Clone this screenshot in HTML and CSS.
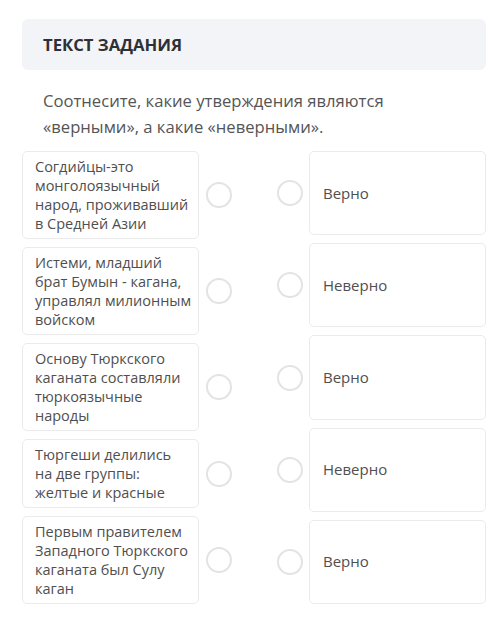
FILE: index.html
```html
<!DOCTYPE html>
<html lang="ru">
<head>
<meta charset="utf-8">
<title>Текст задания</title>
<link rel="stylesheet" href="styles.css">
</head>
<body>
<div class="page">
  <div class="header">ТЕКСТ ЗАДАНИЯ</div>
  <p class="question">Соотнесите, какие утверждения являются «верными», а какие «неверными».</p>
  <div class="match">
    <div class="col left">
      <div class="row"><div class="card">Согдийцы-это<br>монголоязычный<br>народ, проживавший<br>в Средней Азии</div><span class="radio"></span></div>
      <div class="row"><div class="card">Истеми, младший<br>брат Бумын - кагана,<br>управлял милионным<br>войском</div><span class="radio"></span></div>
      <div class="row"><div class="card">Основу Тюркского<br>каганата составляли<br>тюркоязычные<br>народы</div><span class="radio"></span></div>
      <div class="row"><div class="card">Тюргеши делились<br>на две группы:<br>желтые и красные</div><span class="radio"></span></div>
      <div class="row"><div class="card">Первым правителем<br>Западного Тюркского<br>каганата был Сулу<br>каган</div><span class="radio"></span></div>
    </div>
    <div class="col right">
      <div class="row"><span class="radio"></span><div class="card answer">Верно</div></div>
      <div class="row"><span class="radio"></span><div class="card answer">Неверно</div></div>
      <div class="row"><span class="radio"></span><div class="card answer">Верно</div></div>
      <div class="row"><span class="radio"></span><div class="card answer">Неверно</div></div>
      <div class="row"><span class="radio"></span><div class="card answer">Верно</div></div>
    </div>
  </div>
</div>
</body>
</html>
```

FILE: styles.css
```css
html, body {
  margin: 0;
  padding: 0;
  background: #ffffff;
}

body {
  font-family: "Open Sans", "Noto Sans", sans-serif;
  color: #4d4d4d;
}

.page {
  padding: 19px 14px 0 22px;
}

.header {
  height: 51px;
  display: flex;
  align-items: center;
  padding-left: 21px;
  background: #f3f4f8;
  border-radius: 6px;
  font-weight: 700;
  font-size: 16.7px;
  color: #2f3036;
}

.question {
  margin: 18px 0 0;
  padding: 0 60px 0 21px;
  font-size: 16.65px;
  line-height: 26px;
  color: #555555;
}

.match {
  display: flex;
  gap: 45px;
  margin-top: 11px;
}

.col {
  display: flex;
  flex-direction: column;
  gap: 8px;
}

.left {
  width: 210px;
}

.right {
  width: 209px;
}

.row {
  display: flex;
  align-items: center;
  gap: 7px;
}

.right .row {
  flex: 1;
  gap: 6px;
}

.card {
  box-sizing: border-box;
  width: 177px;
  flex: none;
  padding: 5px 2px 5px 12px;
  background: #ffffff;
  border: 1px solid #ebebeb;
  border-radius: 5px;
  font-size: 14.5px;
  line-height: 19px;
  color: #4f4f4f;
  white-space: nowrap;
}

.right .card {
  align-self: stretch;
  display: flex;
  align-items: center;
  padding: 0 13px;
  font-size: 15px;
}

.radio {
  flex: none;
  box-sizing: border-box;
  width: 26px;
  height: 26px;
  border: 2px solid #e3e3e3;
  border-radius: 50%;
}
```
